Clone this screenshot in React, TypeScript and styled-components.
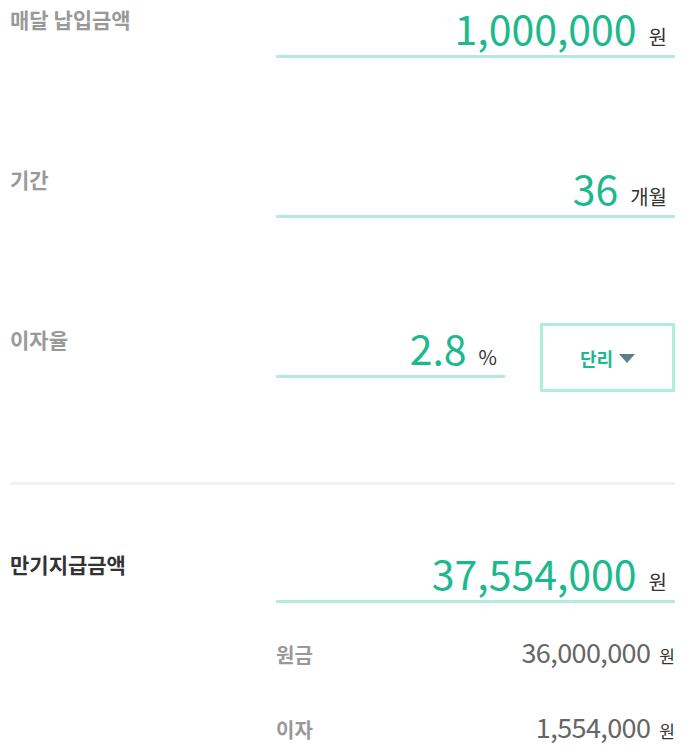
import React from 'react'
import styled, { createGlobalStyle } from 'styled-components'

const GlobalStyle = createGlobalStyle`
  html, body {
    margin: 0;
    padding: 0;
    background: #ffffff;
  }
  body {
    font-family: "Noto Sans CJK KR", "Noto Sans", sans-serif;
  }
`

const Page = styled.div`
  width: 683px;
  box-sizing: border-box;
  padding: 0 8px 0 10px;
`

const Field = styled.div<{ $gap?: number }>`
  display: flex;
  align-items: flex-start;
  margin-top: ${(p) => p.$gap ?? 0}px;
`

const Label = styled.div<{ $dark?: boolean }>`
  width: 266px;
  flex-shrink: 0;
  padding-top: 5px;
  font-size: 21px;
  line-height: 28px;
  font-weight: 700;
  color: ${(p) => (p.$dark ? '#333333' : '#999999')};
`

const Column = styled.div`
  flex: 1;
  display: flex;
  flex-direction: column;
`

const InputRow = styled.div`
  display: flex;
  align-items: flex-start;
`

const ValueBox = styled.div<{ $width?: number }>`
  display: flex;
  justify-content: flex-end;
  align-items: baseline;
  box-sizing: border-box;
  ${(p) => (p.$width ? `width: ${p.$width}px;` : 'flex: 1;')}
  padding: 3px 8px 4px 0;
  border-bottom: 3px solid #b2eddc;
`

const Value = styled.span`
  font-size: 41px;
  line-height: 48px;
  font-weight: 400;
  color: #1bb98d;
`

const Unit = styled.span`
  margin-left: 12px;
  font-size: 20px;
  line-height: 26px;
  color: #333333;
`

const TypeButton = styled.button`
  margin: 3px 0 0 35px;
  width: 135px;
  height: 69px;
  box-sizing: border-box;
  border: 3px solid #aeeedb;
  background: #ffffff;
  display: flex;
  align-items: center;
  justify-content: center;
  gap: 6px;
  padding: 0;
  font-family: inherit;
  font-size: 18px;
  font-weight: 700;
  color: #1bb98d;
  cursor: pointer;
`

const Caret = styled.span`
  width: 0;
  height: 0;
  border-left: 8px solid transparent;
  border-right: 8px solid transparent;
  border-top: 9px solid #5f7f86;
  margin-top: 2px;
`

const Divider = styled.div`
  margin-top: 90px;
  height: 3px;
  background: #f2f2f2;
`

const Breakdown = styled.div<{ $first?: boolean }>`
  display: flex;
  justify-content: space-between;
  align-items: baseline;
  margin-top: ${(p) => (p.$first ? 36 : 45)}px;
  line-height: 26px;
`

const SubLabel = styled.span`
  font-size: 20px;
  font-weight: 700;
  color: #999999;
`

const SubValue = styled.span`
  display: flex;
  align-items: baseline;
`

const SubAmount = styled.span`
  font-size: 27px;
  letter-spacing: -0.6px;
  color: #666666;
`

const SubUnit = styled.span`
  margin-left: 9px;
  font-size: 17px;
  color: #333333;
`

const App = () => {
  return (
    <Page>
      <GlobalStyle />
      <Field>
        <Label>매달 납입금액</Label>
        <Column>
          <ValueBox>
            <Value>1,000,000</Value>
            <Unit>원</Unit>
          </ValueBox>
        </Column>
      </Field>

      <Field $gap={102}>
        <Label>기간</Label>
        <Column>
          <ValueBox>
            <Value>36</Value>
            <Unit>개월</Unit>
          </ValueBox>
        </Column>
      </Field>

      <Field $gap={102}>
        <Label>이자율</Label>
        <Column>
          <InputRow>
            <ValueBox $width={229}>
              <Value>2.8</Value>
              <Unit>%</Unit>
            </ValueBox>
            <TypeButton>
              단리
              <Caret />
            </TypeButton>
          </InputRow>
        </Column>
      </Field>

      <Divider />

      <Field $gap={60}>
        <Label $dark>만기지급금액</Label>
        <Column>
          <ValueBox>
            <Value>37,554,000</Value>
            <Unit>원</Unit>
          </ValueBox>
          <Breakdown $first>
            <SubLabel>원금</SubLabel>
            <SubValue>
              <SubAmount>36,000,000</SubAmount>
              <SubUnit>원</SubUnit>
            </SubValue>
          </Breakdown>
          <Breakdown>
            <SubLabel>이자</SubLabel>
            <SubValue>
              <SubAmount>1,554,000</SubAmount>
              <SubUnit>원</SubUnit>
            </SubValue>
          </Breakdown>
        </Column>
      </Field>
    </Page>
  )
}

export default App
